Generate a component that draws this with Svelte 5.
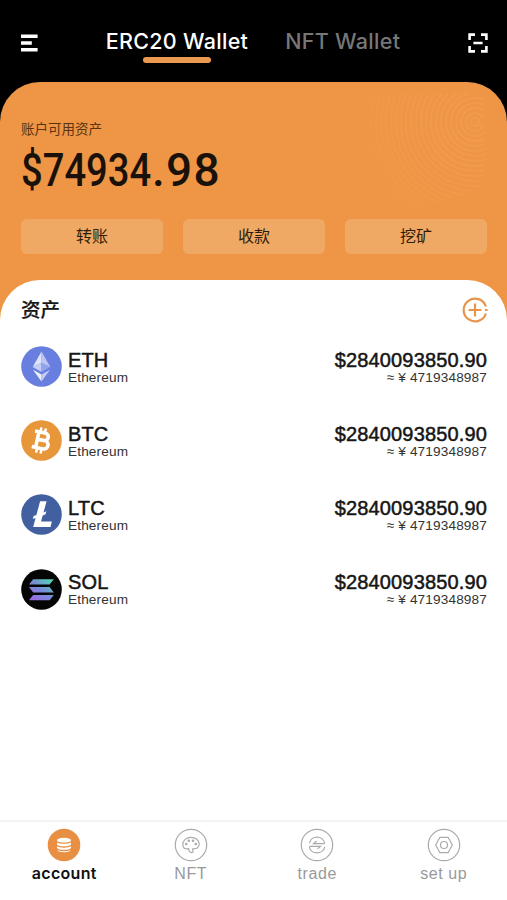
<script>
  let activeWallet = $state('ERC20 Wallet');
  let activeTab = $state('account');

  const wallets = ['ERC20 Wallet', 'NFT Wallet'];
  const actions = ['转账', '收款', '挖矿'];
  const tabs = ['account', 'NFT', 'trade', 'set up'];

  const assets = [
    { symbol: 'ETH', name: 'Ethereum', amount: '$2840093850.90', approx: '4719348987' },
    { symbol: 'BTC', name: 'Ethereum', amount: '$2840093850.90', approx: '4719348987' },
    { symbol: 'LTC', name: 'Ethereum', amount: '$2840093850.90', approx: '4719348987' },
    { symbol: 'SOL', name: 'Ethereum', amount: '$2840093850.90', approx: '4719348987' }
  ];

  // radii of the rings on the balance card
  const rings = Array.from({ length: 26 }, (_, i) => 4 + i * 5);
</script>

<div class="app">
  <header>
    <button class="icon-btn" aria-label="Menu">
      <svg width="18" height="18" viewBox="0 0 18 18" fill="#fff">
        <path d="M1 .5h16.6v3.6H1zM1 7.2h10.8v3.6H1zM1 13.9h16.6v3.6H1z" />
      </svg>
    </button>
    <nav class="wallets">
      {#each wallets as wallet}
        <button class:active={wallet === activeWallet} onclick={() => (activeWallet = wallet)}>
          {wallet}
        </button>
      {/each}
    </nav>
    <button class="icon-btn" aria-label="Scan">
      <svg width="20" height="20" viewBox="0 0 20 20" fill="none" stroke="#fff" stroke-width="2.6">
        <path d="M1.6 7V1.6H7M13 1.6h5.4V7M18.4 13v5.4H13M7 18.4H1.6V13M5.4 10h9.2" />
      </svg>
    </button>
  </header>

  <section class="card">
    <svg class="rings" width="260" height="190" viewBox="0 0 260 190">
      <defs>
        <radialGradient id="fade" gradientUnits="userSpaceOnUse" cx="228" cy="40" r="130">
          <stop offset="0" stop-color="#f5a965" stop-opacity=".35" />
          <stop offset=".55" stop-color="#f5a965" stop-opacity=".2" />
          <stop offset="1" stop-color="#f5a965" stop-opacity="0" />
        </radialGradient>
        <clipPath id="ring-area">
          <path d="M0 12h236v28l3 40-8 28-60 18H0z" />
        </clipPath>
      </defs>
      <g fill="none" stroke="url(#fade)" stroke-width="1.6" clip-path="url(#ring-area)">
        {#each rings as r}
          <circle cx="228" cy="40" {r} />
        {/each}
      </g>
    </svg>
    <div class="label">账户可用资产</div>
    <div class="balance"><span class="whole">$74934</span><span class="cents">.98</span></div>
    <div class="actions">
      {#each actions as action}
        <button>{action}</button>
      {/each}
    </div>
  </section>

  <main>
    <div class="title">
      <h2>资产</h2>
      <button class="icon-btn" aria-label="Add">
        <svg width="26" height="26" viewBox="0 0 26 26" fill="none" stroke="#e8944a" stroke-width="2.2">
          <path d="M23.9 9.5A11.4 11.4 0 1 0 23.9 16.5" />
          <path d="M13 6.6v12.8M6.6 13h12.8M23 13h2.6" />
        </svg>
      </button>
    </div>

    <ul>
      {#each assets as asset}
        <li>
          <svg class="coin" width="41" height="41" viewBox="0 0 41 41">
            {#if asset.symbol === 'ETH'}
              <circle cx="20.5" cy="20.5" r="20.3" fill="#687fe0" />
              <path d="M20.5 5.5 11.7 20.9l8.8-4z" fill="#dfe4fa" />
              <path d="m20.5 5.5 8.8 15.4-8.8-4z" fill="#bcc7f3" />
              <path d="m11.7 20.9 8.8-4v9z" fill="#c4cdf5" />
              <path d="m29.3 20.9-8.8-4v9z" fill="#94a4e9" />
              <path d="m11.9 23.8 8.6 4.6v7.2z" fill="#eef0fd" />
              <path d="m29.1 23.8-8.6 4.6v7.2z" fill="#c1cbf4" />
            {:else if asset.symbol === 'BTC'}
              <circle cx="20.5" cy="20.5" r="20.3" fill="#e8963a" />
              <g transform="rotate(12 20.5 20.5)" fill="none" stroke="#fff">
                <path
                  d="M12.2 12.5h10.2c5.4 0 5.4 7.5 0 7.5h-5.9 6.9c6 0 6 8.5 0 8.5H12.2M16.2 12.5v16"
                  stroke-width="3.6"
                />
                <path d="M17.7 7.8v4.5M22.3 7.8v4.5M17.7 29v4.5M22.3 29v4.5" stroke-width="2.5" />
              </g>
            {:else if asset.symbol === 'LTC'}
              <circle cx="20.5" cy="20.5" r="20.3" fill="#42609f" />
              <path
                d="M19.1 7.2h6.5l-3.1 11.3 2.9-1.2-.8 2.9-2.9 1.2-1.7 6.2h10.8l-1.3 5.5H12.1l2.5-9.2-2.8 1.1.8-2.9 2.8-1.1z"
                fill="#fff"
              />
            {:else}
              <defs>
                <linearGradient id="sol" x1="0" y1="1" x2="1" y2="0">
                  <stop offset="0" stop-color="#a264e8" />
                  <stop offset=".5" stop-color="#778bd5" />
                  <stop offset="1" stop-color="#4ce0ad" />
                </linearGradient>
              </defs>
              <circle cx="20.5" cy="20.5" r="20.3" fill="#050505" />
              <path
                d="M12.2 10.2h20.6l-4.2 5.4H8zM8 18h20.6l4.2 5.4H12.2zM12.2 25.9h20.6l-4.2 5.4H8z"
                fill="url(#sol)"
              />
            {/if}
          </svg>
          <div class="coin-name">
            <strong>{asset.symbol}</strong>
            <span>{asset.name}</span>
          </div>
          <div class="value">
            <strong>{asset.amount}</strong>
            <span>≈ ¥ {asset.approx}</span>
          </div>
        </li>
      {/each}
    </ul>
  </main>

  <footer>
    {#each tabs as tab}
      <button class:active={tab === activeTab} onclick={() => (activeTab = tab)}>
        <svg width="34" height="34" viewBox="0 0 34 34" fill="none" stroke="#aaa" stroke-width="1.2">
          {#if tab === 'account'}
            <circle cx="17" cy="17" r="16.3" fill="#e98f43" stroke="none" />
            <g fill="#fff" stroke="none">
              <ellipse cx="17" cy="12.2" rx="7" ry="2.4" />
              <path d="M10 14.4c2.6 1.8 11.4 1.8 14 0v2c-1.5 2.5-12.5 2.5-14 0z" />
              <path d="M10 18.3c2.6 1.8 11.4 1.8 14 0v1.6c-1.5 2.5-12.5 2.5-14 0z" />
              <path d="M10.3 22c2.6 1.6 10.8 1.6 13.4 0-.8 2.9-12.6 2.9-13.4 0z" />
            </g>
          {:else}
            <circle cx="17" cy="17" r="15.7" />
            {#if tab === 'NFT'}
              <path
                d="M14.6 20.6c-3.6 1.2-5.8-.8-5.8-3.9 0-4.2 3.6-7.4 8.2-7.4s8.2 3.1 8.2 6.8c0 3.2-2.6 4.9-5.3 4.6-1.6-.2-1.4 1.2-.9 2.4.6 1.7-2.4 2-3.6.4-.8-1-.3-1.8-.8-2.9z"
              />
              <circle cx="12.2" cy="16" r=".7" />
              <circle cx="14.8" cy="12.7" r=".7" />
              <circle cx="19" cy="12.7" r=".7" />
              <circle cx="21.8" cy="16" r=".7" />
            {:else if tab === 'trade'}
              <path d="M9.4 15.2C10.6 7.1 23.4 7.1 24.7 15.2M9.4 18.8c1.2 8.1 14 8.1 15.3 0" />
              <path d="M24.7 15.6H13.6l3-2.6M9.4 18.3h11.1l-3 2.6" />
            {:else}
              <path d="M12.9 9.3h8.2l4.2 7.7-4.2 7.7h-8.2L8.7 17z" stroke-linejoin="round" />
              <circle cx="17" cy="17" r="3.5" />
            {/if}
          {/if}
        </svg>
        <span>{tab}</span>
      </button>
    {/each}
  </footer>
</div>

<style>
  :global(body) {
    margin: 0;
    background: #000;
  }

  .app {
    display: flex;
    flex-direction: column;
    height: 900px;
    background: #000;
    color: #161616;
    font-family: 'Liberation Sans', 'Noto Sans CJK SC', sans-serif;
  }

  button {
    padding: 0;
    border: 0;
    background: none;
    color: inherit;
    font: inherit;
    cursor: pointer;
  }

  .icon-btn {
    display: flex;
  }

  svg {
    display: block;
  }

  header {
    display: flex;
    align-items: center;
    justify-content: space-between;
    box-sizing: border-box;
    height: 82px;
    padding: 4px 19px 0 20px;
  }

  .wallets {
    display: flex;
    gap: 37px;
    padding-top: 3px;
  }

  .wallets button {
    display: flex;
    flex-direction: column;
    align-items: center;
    height: 37px;
    color: #777;
    font: 500 21.5px/31px Inter, sans-serif;
    letter-spacing: 0.3px;
    white-space: nowrap;
  }

  .wallets button.active {
    color: #fff;
  }

  .wallets button.active::after {
    content: '';
    width: 68px;
    height: 6px;
    border-radius: 3px;
    background: #eb9850;
  }

  .card {
    position: relative;
    box-sizing: border-box;
    height: 238px;
    flex: none;
    padding: 38px 20px 0 21px;
    border-radius: 40px 40px 0 0;
    background: #ee9646;
    overflow: hidden;
  }

  /* decoration behind the balance */
  .rings {
    position: absolute;
    top: 0;
    right: 0;
  }

  .label {
    color: #5a3410;
    font-size: 13.5px;
    line-height: 20px;
  }

  .balance {
    display: flex;
    height: 60px;
    color: #1a120a;
    font: 500 46px/60px Roboto, sans-serif;
  }

  .whole {
    width: 131px;
    transform: scaleX(0.83);
    transform-origin: left;
  }

  .cents {
    letter-spacing: 1.3px;
  }

  .actions {
    position: relative;
    display: grid;
    grid-template-columns: repeat(3, 1fr);
    gap: 20px;
    margin-top: 19px;
  }

  .actions button {
    height: 35px;
    border-radius: 6px;
    background: #f0a964;
    color: #2e1c0b;
    font-size: 16px;
    line-height: 36px;
  }

  main {
    flex: 1;
    margin-top: -40px;
    padding: 0 19px 0 21px;
    border-radius: 40px 40px 0 0;
    background: #fff;
    z-index: 1;
  }

  .title {
    display: flex;
    align-items: center;
    justify-content: space-between;
    height: 59px;
  }

  .title h2 {
    margin: 0 0 3px;
    font-size: 19.5px;
    font-weight: 500;
    -webkit-text-stroke: 0.2px;
  }

  ul {
    margin: 0;
    padding: 0 1px 0 0;
    list-style: none;
  }

  li {
    display: flex;
    align-items: center;
    height: 41px;
    margin: 7px 0 33.2px;
  }

  .coin-name,
  .value {
    display: flex;
    flex-direction: column;
    padding-top: 1px;
  }

  .coin-name {
    margin-left: 6px;
  }

  .value {
    margin-left: auto;
    text-align: right;
  }

  li + li {
    margin-top: 0;
  }

  li strong {
    font-size: 20px;
    font-weight: 400;
    line-height: 21px;
    letter-spacing: 0.15px;
    -webkit-text-stroke: 0.5px;
  }

  li span {
    color: #333;
    font-size: 13.6px;
    line-height: 14px;
    letter-spacing: 0.15px;
  }

  footer {
    display: grid;
    grid-template-columns: repeat(4, 1fr);
    box-sizing: border-box;
    height: 80px;
    padding: 6px 0 0 1px;
    border-top: 2px solid #f3f3f3;
    background: #fff;
  }

  footer button {
    display: flex;
    flex-direction: column;
    align-items: center;
    color: #999;
    font-size: 16px;
    line-height: 23px;
    letter-spacing: 0.6px;
  }

  footer span {
    white-space: nowrap;
  }

  footer button.active {
    color: #111;
    font-family: Inter, sans-serif;
    font-weight: 600;
    letter-spacing: 0.3px;
  }
</style>
